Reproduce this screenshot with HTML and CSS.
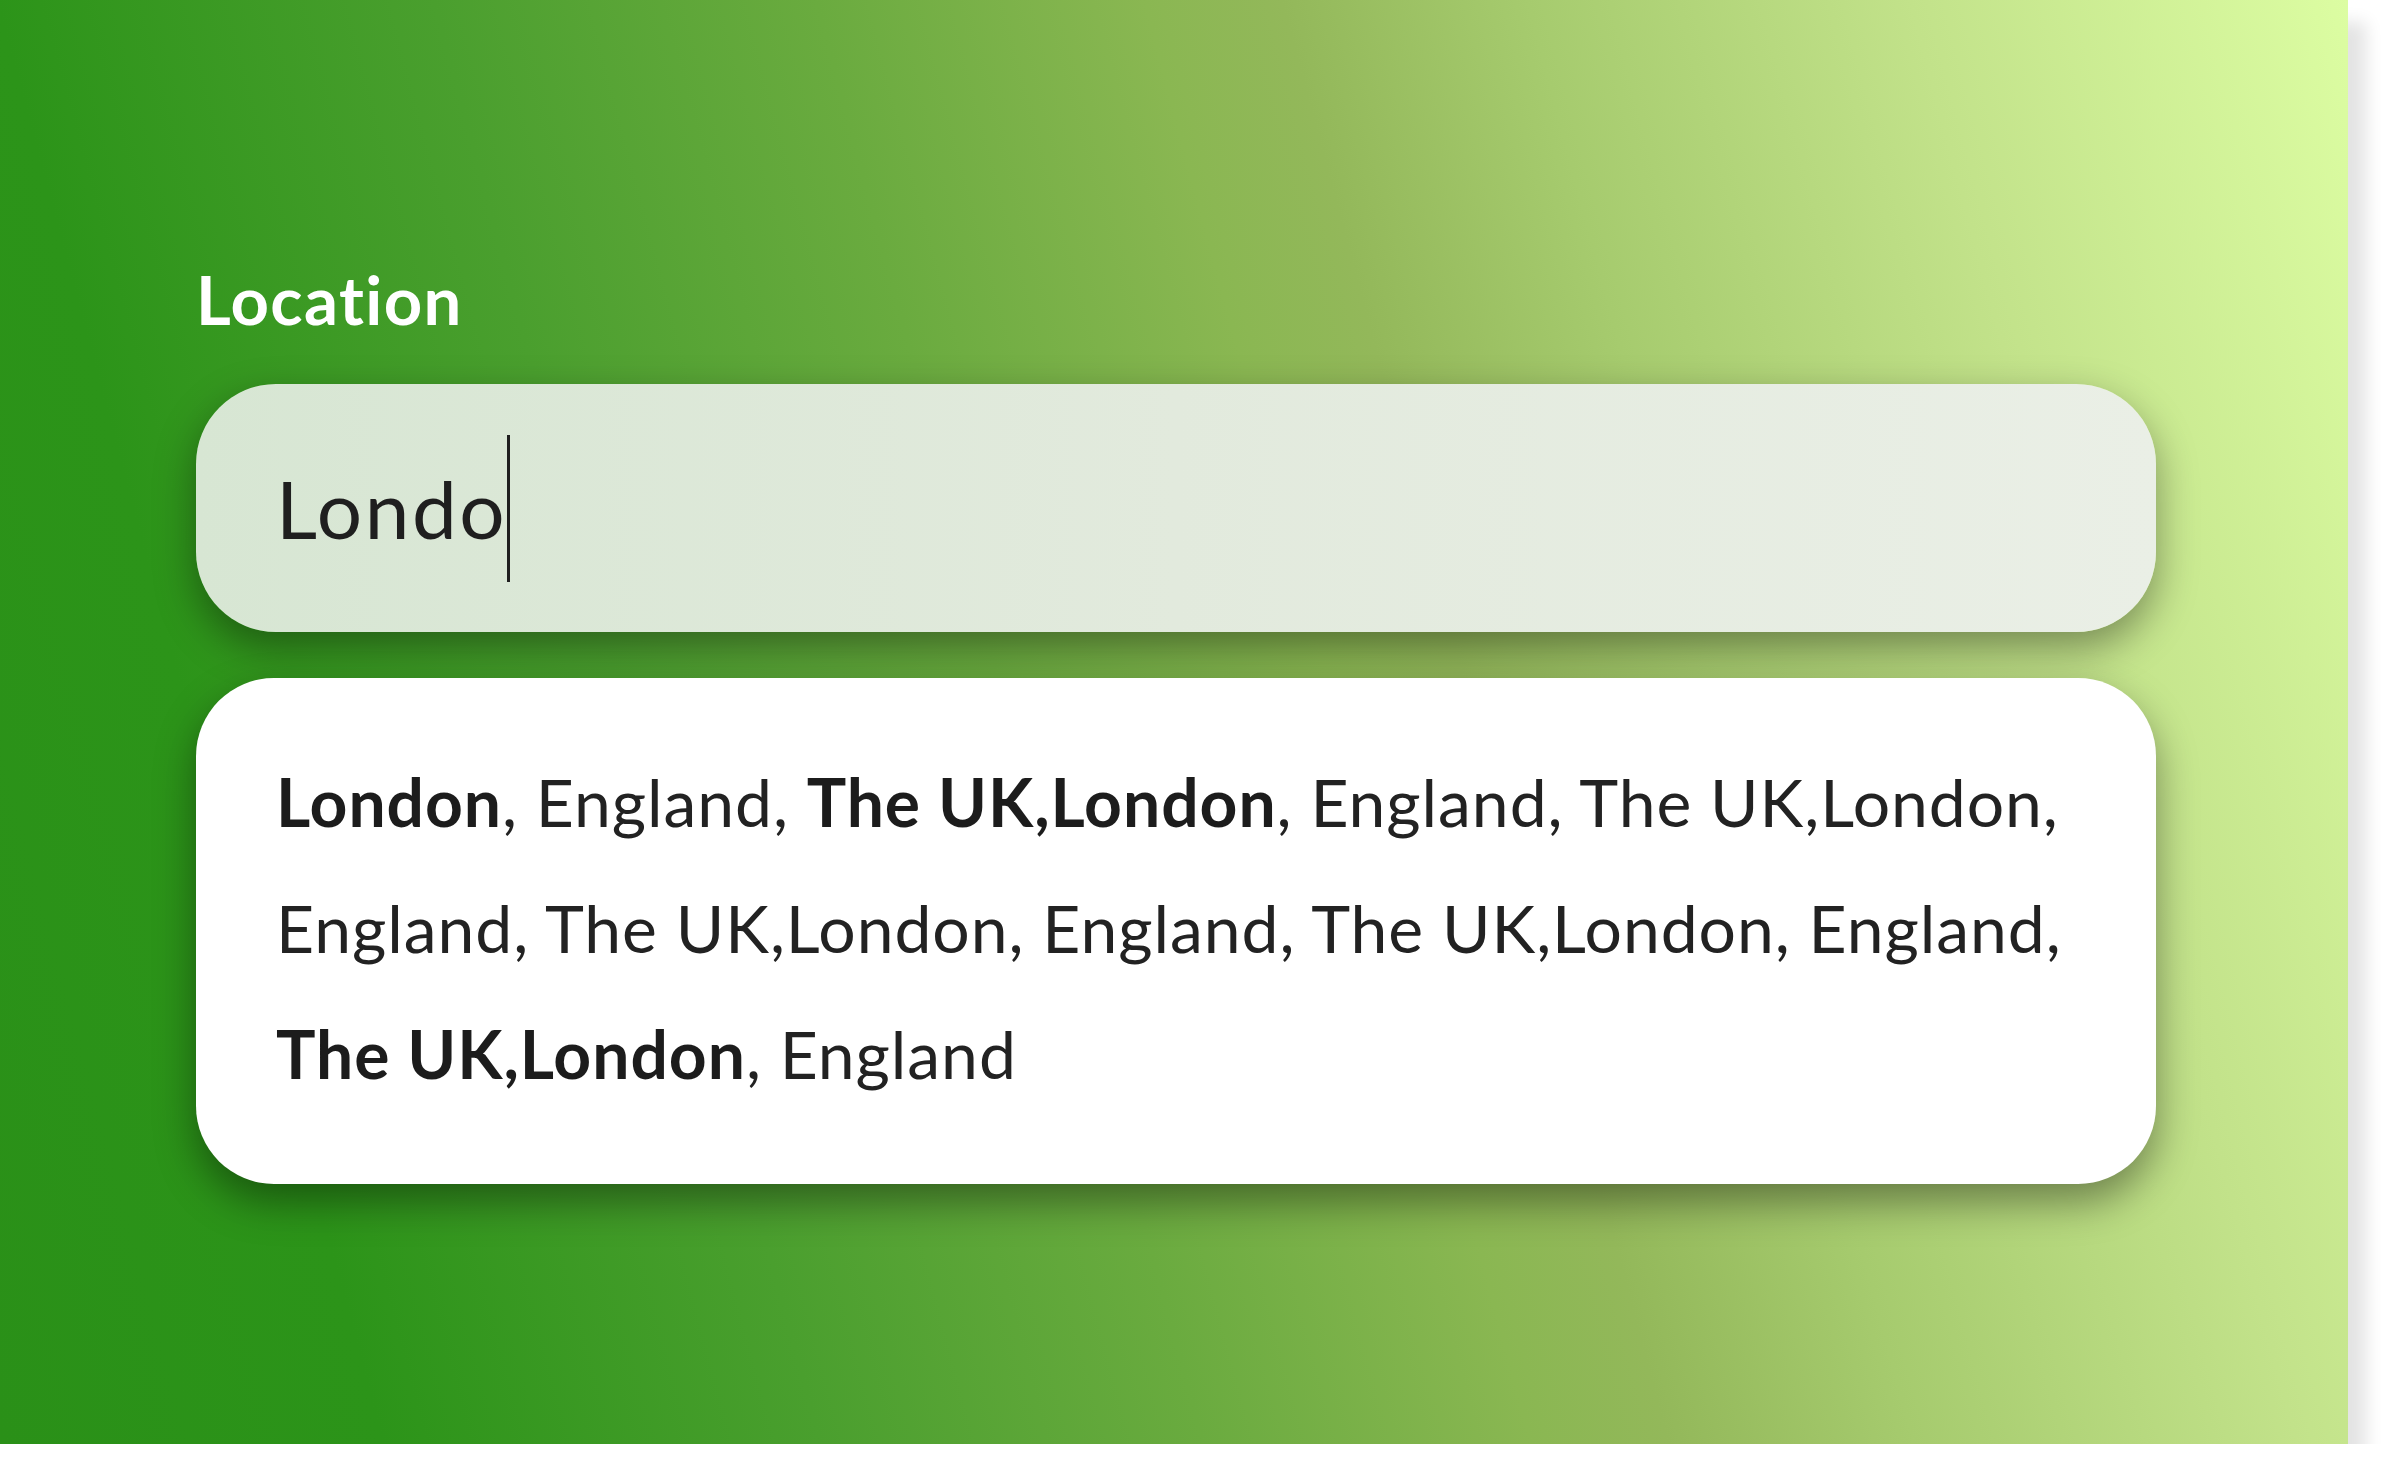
FILE: index.html
```html
<!DOCTYPE html>
<html lang="en">
<head>
<meta charset="utf-8">
<title>Location</title>
<link rel="stylesheet" href="styles.css">
</head>
<body>
<main class="panel">
  <label class="label" for="loc">Location</label>
  <div class="input">
    <span class="input-text">Londo</span><span class="caret"></span>
  </div>
  <div class="dropdown">
    <p class="suggest"><b>London</b>, England, <b>The UK,London</b>, England, The UK,London,<br>England, The UK,London, England, The UK,London, England,<br><b>The UK,London</b>, England</p>
  </div>
</main>
</body>
</html>
```

FILE: styles.css
```css
html, body {
  margin: 0;
  padding: 0;
  background: #ffffff;
}

.panel {
  box-sizing: border-box;
  width: 2348px;
  height: 1444px;
  padding: 259px 0 0 196px;
  display: flex;
  flex-direction: column;
  background: linear-gradient(75deg,
    #2a9018 0%,
    #2c9419 14%,
    #4a9f2e 30%,
    #6aab3f 44%,
    #8ab752 56%,
    #93b85a 61%,
    #a6cb6e 70%,
    #c2e28a 84%,
    #dcfda2 100%);
  box-shadow: 18px 22px 16px rgba(0, 0, 0, 0.11);
  font-family: "Lato", "Noto Sans", sans-serif;
  font-variant-ligatures: none;
}

.label {
  display: block;
  color: #ffffff;
  font-family: "Lato", "Noto Sans", sans-serif;
  font-weight: 700;
  font-size: 67px;
  line-height: 80px;
  letter-spacing: 1.4px;
  margin-bottom: 45px;
}

.input {
  box-sizing: border-box;
  width: 1960px;
  height: 248px;
  border-radius: 80px;
  padding-left: 80px;
  display: flex;
  align-items: center;
  background: linear-gradient(90deg, #d7e6d3 0%, #e2eadd 50%, #eaefe6 100%);
  box-shadow: 0 16px 40px rgba(0, 0, 0, 0.38);
}

.input-text {
  font-size: 80px;
  color: #1f1f1f;
  font-weight: 400;
  line-height: 1;
  letter-spacing: 2.6px;
}

.caret {
  display: inline-block;
  width: 3px;
  height: 147px;
  margin-left: 0;
  background: #1f1f1f;
}

.dropdown {
  box-sizing: border-box;
  width: 1960px;
  height: 506px;
  margin-top: 46px;
  border-radius: 78px;
  padding: 61px 60px 0 80px;
  background: #ffffff;
  box-shadow: 0 18px 40px rgba(0, 0, 0, 0.4);
}

.suggest {
  margin: 0;
  font-size: 66px;
  line-height: 126px;
  letter-spacing: 0.95px;
  color: #222222;
  white-space: nowrap;
}

.suggest b {
  font-weight: 700;
  color: #1c1c1c;
}
```
